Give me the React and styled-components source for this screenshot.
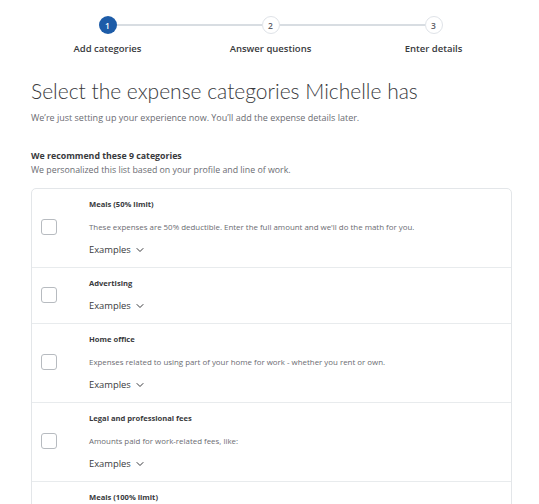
import React from "react";
import styled, { createGlobalStyle } from "styled-components";

const GlobalStyle = createGlobalStyle`
  body {
    margin: 0;
    background: #ffffff;
    font-family: "Open Sans", "Noto Sans", sans-serif;
    color: #393a3d;
  }
`;

const Page = styled.div`
  padding: 16px 27px 0 31px;
  overflow: hidden;
  height: 504px;
  box-sizing: border-box;
`;

const Stepper = styled.div`
  display: grid;
  grid-template-columns: repeat(3, 163px);
  margin-left: -5px;
`;

const Step = styled.div`
  display: flex;
  flex-direction: column;
  align-items: center;
`;

const Track = styled.div`
  display: flex;
  align-items: center;
  width: 100%;
`;

const Line = styled.div`
  flex: 1;
  height: 2px;
  background: ${(p) => (p.$hidden ? "transparent" : "#d8dde2")};
`;

const Circle = styled.div`
  width: 18px;
  height: 18px;
  border-radius: 50%;
  box-sizing: border-box;
  display: flex;
  align-items: center;
  justify-content: center;
  font-size: 8.5px;
  font-weight: 600;
  background: ${(p) => (p.$active ? "#1d5ca8" : "#ffffff")};
  color: ${(p) => (p.$active ? "#ffffff" : "#5f6168")};
  border: ${(p) => (p.$active ? "none" : "1.5px solid #dfe3e8")};
`;

const StepLabel = styled.div`
  margin-top: 8px;
  font-size: 9.5px;
  font-weight: 600;
  color: #393a3d;
`;

const Title = styled.h1`
  margin: 22px 0 0;
  font-family: "Lato", "Open Sans", sans-serif;
  font-size: 21px;
  font-weight: 300;
  line-height: 27px;
  color: #393a3d;
`;

const Subtitle = styled.p`
  margin: 7px 0 0;
  font-size: 9px;
  line-height: 14px;
  color: #6b6c72;
`;

const SectionHead = styled.div`
  margin-top: 24px;
  font-size: 8.8px;
  line-height: 14px;
`;

const SectionTitle = styled.div`
  font-weight: 700;
  color: #393a3d;
`;

const SectionText = styled.div`
  color: #6b6c72;
`;

const Card = styled.div`
  margin-top: 11px;
  border: 1px solid #e3e6e9;
  border-radius: 5px;
`;

const Row = styled.div`
  display: flex;
  align-items: center;
  border-top: ${(p) => (p.$first ? "none" : "1px solid #e8ebed")};
  padding: 9px 0 11px 9px;
`;

const Checkbox = styled.div`
  width: 14px;
  height: 14px;
  border: 1px solid #b7bbc0;
  border-radius: 3px;
  flex-shrink: 0;
  margin-right: 32px;
`;

const Body = styled.div`
  display: flex;
  flex-direction: column;
  gap: 11px;
`;

const RowTitle = styled.div`
  font-size: 7.6px;
  line-height: 12px;
  font-weight: 700;
  color: #393a3d;
`;

const RowText = styled.div`
  font-size: 7.9px;
  line-height: 12px;
  color: #6b6c72;
`;

const Examples = styled.div`
  display: flex;
  align-items: center;
  gap: 5px;
  font-size: 9.4px;
  line-height: 12px;
  color: #393a3d;
`;

const steps = ["Add categories", "Answer questions", "Enter details"];

const categories = [
  {
    title: "Meals (50% limit)",
    text: "These expenses are 50% deductible. Enter the full amount and we'll do the math for you.",
  },
  { title: "Advertising" },
  {
    title: "Home office",
    text: "Expenses related to using part of your home for work - whether you rent or own.",
  },
  {
    title: "Legal and professional fees",
    text: "Amounts paid for work-related fees, like:",
  },
  {
    title: "Meals (100% limit)",
    text: "Meals that are fully deductible.",
  },
];

function Chevron() {
  return (
    <svg width="8" height="6" viewBox="0 0 8 6" fill="none">
      <path d="M1 1.5l3 3 3-3" stroke="#393a3d" strokeWidth="1" strokeLinecap="round" strokeLinejoin="round" />
    </svg>
  );
}

export default function App() {
  return (
    <>
      <GlobalStyle />
      <Page>
        <Stepper>
          {steps.map((s, i) => (
            <Step key={s}>
              <Track>
                <Line $hidden={i === 0} />
                <Circle $active={i === 0}>{i + 1}</Circle>
                <Line $hidden={i === steps.length - 1} />
              </Track>
              <StepLabel>{s}</StepLabel>
            </Step>
          ))}
        </Stepper>
        <Title>Select the expense categories Michelle has</Title>
        <Subtitle>We’re just setting up your experience now. You’ll add the expense details later.</Subtitle>
        <SectionHead>
          <SectionTitle>We recommend these 9 categories</SectionTitle>
          <SectionText>We personalized this list based on your profile and line of work.</SectionText>
        </SectionHead>
        <Card>
          {categories.map((c, i) => (
            <Row key={c.title} $first={i === 0}>
              <Checkbox />
              <Body>
                <RowTitle>{c.title}</RowTitle>
                {c.text && <RowText>{c.text}</RowText>}
                <Examples>
                  Examples <Chevron />
                </Examples>
              </Body>
            </Row>
          ))}
        </Card>
      </Page>
    </>
  );
}
